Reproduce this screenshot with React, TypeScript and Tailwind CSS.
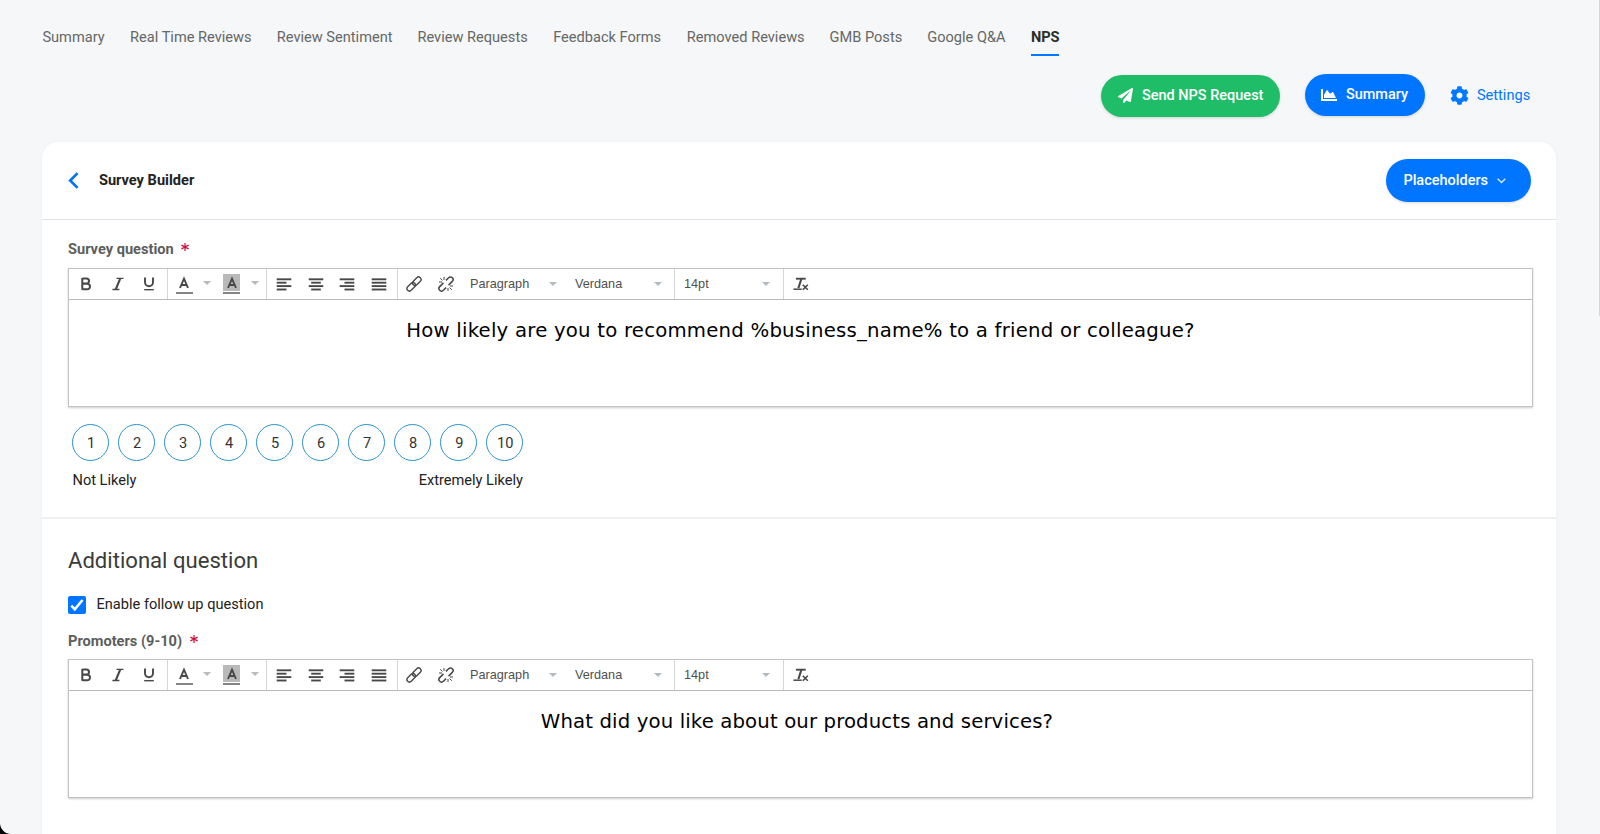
import type { ReactNode } from "react";
import { FaPaperPlane, FaChartArea, FaCog } from "react-icons/fa";

const tabs = [
  { label: "Summary", width: "w-[62px]" },
  { label: "Real Time Reviews", width: "w-[121px]" },
  { label: "Review Sentiment", width: "w-[115px]" },
  { label: "Review Requests", width: "w-[110px]" },
  { label: "Feedback Forms", width: "w-[108px]" },
  { label: "Removed Reviews", width: "w-[117px]" },
  { label: "GMB Posts", width: "w-[72px]" },
  { label: "Google Q&A", width: "w-[78px]" },
];

function Icon({ children, className = "" }: { children: ReactNode; className?: string }) {
  return (
    <svg viewBox="0 0 16 16" className={`size-4 shrink-0 ${className}`} fill="none" stroke="#484848" strokeWidth="1.6">
      {children}
    </svg>
  );
}

function Tool({ children, className = "w-[31.7px]" }: { children: ReactNode; className?: string }) {
  return <button className={`flex h-full shrink-0 items-center justify-center ${className}`}>{children}</button>;
}

function Caret() {
  return <span className="block size-0 shrink-0 border-x-4 border-t-4 border-x-transparent border-t-[#b3bac0]" />;
}

function Group({ children, className }: { children: ReactNode; className: string }) {
  return <div className={`flex h-full shrink-0 items-center ${className}`}>{children}</div>;
}

function AlignIcon({ rows }: { rows: number[][] }) {
  return (
    <Icon>
      {rows.map(([x1, x2], i) => (
        <path key={i} d={`M${x1} ${3.3 + i * 3.4}H${x2}`} strokeWidth="1.9" />
      ))}
    </Icon>
  );
}

function Select({ label, className }: { label: string; className: string }) {
  return (
    <button className={`flex h-full shrink-0 items-center justify-between font-['Liberation_Sans',Arial,sans-serif] text-[12.7px] text-[#505050] ${className}`}>
      <span className="pt-[2px]">{label}</span>
      <Caret />
    </button>
  );
}

function Editor({ text, className }: { text: string; className: string }) {
  return (
    <div className="h-[139px] w-[1465px] border border-[#c3c3c3] shadow-[0_1px_2px_rgba(0,0,0,0.2)]">
      <div className="flex h-[31px] items-center border-b border-[#b9b9b9]">
        <Group className="w-[99px] border-r border-[#d6d6d6] pl-px">
          <Tool>
            <Icon>
              <path d="M4.3 2v11.8M4.3 2.6h4.2a2.5 2.5 0 0 1 0 5H4.3M4.3 7.7h4.9a2.8 2.8 0 0 1 0 5.6H4.3" strokeWidth="2" />
            </Icon>
          </Tool>
          <Tool>
            <Icon>
              <path d="M6.5 2.3h7M2.4 13.5h7" strokeWidth="1.3" />
              <path d="M10.3 2.3 5.7 13.5" strokeWidth="2.1" />
            </Icon>
          </Tool>
          <Tool>
            <Icon>
              <path d="M4 1.5v4.7a4 4 0 0 0 8 0V1.5" strokeWidth="1.9" />
              <path d="M3.2 13.7h9.6" strokeWidth="1.4" />
            </Icon>
          </Tool>
        </Group>
        <Group className="w-[99px] border-r border-[#d6d6d6]">
          <Tool className="w-[33px]">
            <span className="flex h-5 w-[17px] flex-col items-center border-b-2 border-[#858585]">
              <Icon>
                <path d="M4 14 8 4.6l4 9.4M5.3 11h5.4" strokeWidth="1.9" />
              </Icon>
            </span>
          </Tool>
          <Tool className="w-[12px] pb-[3px]"><Caret /></Tool>
          <Tool className="w-[38px]">
            <span className="flex h-5 w-[17px] flex-col items-center border-b-2 border-[#858585]">
              <span className="flex h-[17px] w-[17px] shrink-0 justify-center bg-[#b9b9b9]">
                <Icon>
                  <path d="M4 14 8 4.6l4 9.4M5.3 11h5.4" strokeWidth="1.9" />
                </Icon>
              </span>
            </span>
          </Tool>
          <Tool className="w-[8px] pb-[3px]"><Caret /></Tool>
        </Group>
        <Group className="w-[131px] border-r border-[#d6d6d6] pl-px">
          <Tool><AlignIcon rows={[[0.7, 15.3], [0.7, 10.5], [0.7, 15.3], [0.7, 10.5]]} /></Tool>
          <Tool><AlignIcon rows={[[0.7, 15.3], [3.2, 12.8], [0.7, 15.3], [3.2, 12.8]]} /></Tool>
          <Tool><AlignIcon rows={[[0.7, 15.3], [5.5, 15.3], [0.7, 15.3], [5.5, 15.3]]} /></Tool>
          <Tool><AlignIcon rows={[[0.7, 15.3], [0.7, 15.3], [0.7, 15.3], [0.7, 15.3]]} /></Tool>
        </Group>
        <Group className="w-[277px] border-r border-[#d6d6d6]">
          <Tool>
            <Icon>
              <g transform="rotate(-45 8 8)" strokeWidth="1.4">
                <rect x="-0.9" y="5.5" width="9.9" height="5" rx="2.5" />
                <rect x="7" y="5.5" width="9.9" height="5" rx="2.5" />
              </g>
            </Icon>
          </Tool>
          <Tool>
            <Icon>
              <g transform="rotate(-45 8 8)" strokeWidth="1.5">
                <path d="M5.5 10.6H1.7a2.6 2.6 0 0 1 0-5.2H7M10.5 5.4h3.8a2.6 2.6 0 0 1 0 5.2H9" />
              </g>
              <path d="M6 1v3M2.2 2.2l2.2 2.2M1 6h3M10 15v-3M13.8 13.8l-2.2-2.2M15 10h-3" strokeWidth="1" />
            </Icon>
          </Tool>
          <Select label="Paragraph" className="ml-[8.6px] w-[87.5px]" />
          <Select label="Verdana" className="ml-[17.5px] w-[87.5px]" />
        </Group>
        <Group className="w-[109px] border-r border-[#d6d6d6] pl-[9px]">
          <Select label="14pt" className="w-[86px]" />
        </Group>
        <Tool className="ml-[1px] w-[31.7px]">
          <Icon>
            <path d="M2.9 2.7h9.8" strokeWidth="1.9" />
            <path d="M.4 13.2h8.3" strokeWidth="1.5" />
            <path d="M8.4 2.7 5.4 12" strokeWidth="2.1" />
            <path d="m9.8 8.8 5 5M14.8 8.8l-5 5" strokeWidth="1.6" />
          </Icon>
        </Tool>
      </div>
      <p className={`pt-4 text-center font-['DejaVu_Sans',Verdana,sans-serif] text-[19.7px] leading-[30px] whitespace-nowrap text-black ${className}`}>
        {text}
      </p>
    </div>
  );
}

function FieldLabel({ children }: { children: ReactNode }) {
  return (
    <div className="flex h-6 items-center gap-[7.5px] text-[14.6px] font-bold text-[#5c5e5c]">
      <span className="pt-[2px]">{children}</span>
      <svg viewBox="0 0 8 8" className="mb-[5px] size-2" stroke="#d0103a" strokeWidth="1.2">
        <path d="M4 0v8M.4 2.1l7.2 3.8M7.6 2.1.4 5.9" />
      </svg>
    </div>
  );
}

export default function App() {
  return (
    <div className="relative h-[834px] w-[1600px] overflow-hidden bg-black font-[Roboto,sans-serif] text-[14.6px] text-[#222]">
      <div className="h-full overflow-hidden rounded-bl-[11px] bg-[#f5f7f9] px-[42.4px]">
        <nav className="flex h-14 gap-[25.7px] pt-[25px] leading-6 text-[#666866]">
          {tabs.map((t) => (
            <a key={t.label} className={`shrink-0 whitespace-nowrap ${t.width}`}>{t.label}</a>
          ))}
          <a className="h-[31px] w-7 border-b-2 border-[#0078ff] font-bold text-[#2b2d2b]">NPS</a>
        </nav>
        <div className="flex h-[86px] pt-[18px] pl-[1059px] text-[14.5px] font-medium">
          <button className="mt-px flex h-[42px] w-[178.5px] items-center rounded-full bg-[#20bd68] pl-[17px] text-white shadow-[0_1px_3px_rgba(0,0,0,0.15)]">
            <FaPaperPlane className="mb-px size-[15px]" />
            <span className="ml-[8.5px] whitespace-nowrap">Send NPS Request</span>
          </button>
          <button className="ml-[25.5px] flex h-[42px] w-[120px] items-center rounded-full bg-[#0075ff] pl-4 text-white shadow-[0_1px_3px_rgba(0,0,0,0.15)]">
            <FaChartArea className="size-4" />
            <span className="ml-[8.5px]">Summary</span>
          </button>
          <button className="ml-[24.5px] flex h-[43px] items-center text-[14.6px] font-normal text-[#0078ff]">
            <FaCog className="size-[19px]" />
            <span className="ml-2">Settings</span>
          </button>
        </div>
        <main className="h-[720px] w-[1514px] rounded-t-2xl bg-white shadow-[0_0_4px_rgba(0,0,0,0.04)]">
          <header className="flex h-[78px] items-center justify-between border-b-[1.5px] border-[#e1e3ea] pr-[25.5px] pl-[26px]">
            <div className="flex items-center">
              <svg viewBox="0 0 11 18" className="h-[17px] w-[11px]" fill="none" stroke="#0070ff" strokeWidth="2.8">
                <path d="M9.8 1.2 2 9l7.8 7.8" />
              </svg>
              <h1 className="ml-[19.5px] text-[14.6px] font-bold">Survey Builder</h1>
            </div>
            <button className="flex h-[43px] w-[145px] items-center rounded-full bg-[#0075ff] pl-[17.5px] text-[14.5px] font-medium text-white shadow-[0_1px_3px_rgba(0,0,0,0.15)]">
              Placeholders
              <svg viewBox="0 0 9 6" className="ml-[9px] h-[6px] w-[9px]" fill="none" stroke="#d5e8ff" strokeWidth="1.4">
                <path d="m.7.8 3.8 3.8L8.3.8" />
              </svg>
            </button>
          </header>
          <section className="h-[299px] border-b-2 border-[#eeeff0] px-[25.6px] pt-[17px]">
            <FieldLabel>Survey question</FieldLabel>
            <div className="mt-[7px]">
              <Editor text="How likely are you to recommend %business_name% to a friend or colleague?" className="tracking-[0.22px]" />
            </div>
            <div className="mt-[17px] ml-1 flex w-[451.3px] justify-between">
              {Array.from({ length: 10 }, (_, i) => (
                <button key={i} className="flex size-[37px] items-center justify-center rounded-full border border-[#2a93c8] pt-[2px] pl-px text-[#333]">
                  {i + 1}
                </button>
              ))}
            </div>
            <div className="mt-[7px] ml-[4.5px] flex w-[450.5px] justify-between leading-6">
              <span>Not Likely</span>
              <span>Extremely Likely</span>
            </div>
          </section>
          <section className="px-[25.6px] pt-[25px]">
            <h2 className="text-[22.1px] leading-8 text-[#3a3c3a]">Additional question</h2>
            <label className="mt-[17px] flex h-6 items-center">
              <span className="flex size-[18px] items-center justify-center rounded-[2px] bg-[#0075ff]">
                <svg viewBox="0 0 14 14" className="size-[14px]" fill="none" stroke="white" strokeWidth="2.6">
                  <path d="m1.3 7.6 3.5 3.7L12.5 2" />
                </svg>
              </span>
              <span className="ml-[10.5px]">Enable follow up question</span>
            </label>
            <div className="mt-3">
              <FieldLabel>Promoters (9-10)</FieldLabel>
            </div>
            <div className="mt-[6px]">
              <Editor text="What did you like about our products and services?" className="pr-[7px] tracking-[0.13px]" />
            </div>
          </section>
        </main>
      </div>
      <div className="absolute top-0 right-0 h-[316px] w-px bg-[#d5d6d8]" />
    </div>
  );
}
